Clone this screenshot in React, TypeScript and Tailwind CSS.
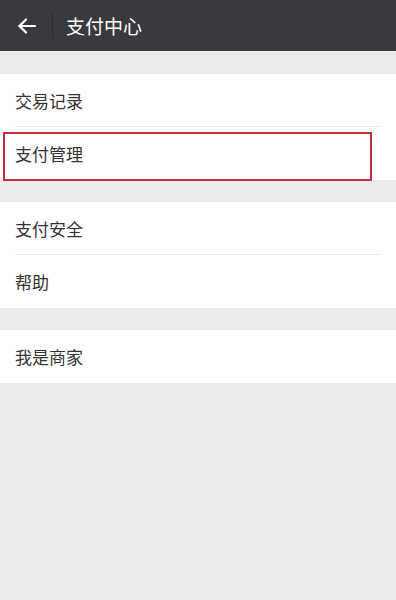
import React from "react";

const font = { fontFamily: '"Noto Sans CJK SC", "Noto Sans", sans-serif' };

function Row({ label, divider }: { label: string; divider?: boolean }) {
  return (
    <div className="relative h-[53px] flex items-center pl-[15px] bg-white">
      <span className="text-[17px] leading-none text-[#333333]">{label}</span>
      {divider && <div className="absolute left-[15px] right-[16px] bottom-0 h-px bg-[#e8e8e8]" />}
    </div>
  );
}

export default function App() {
  return (
    <div className="relative w-[396px] min-h-[600px] bg-[#ebebeb]" style={font}>
      {/* Top bar */}
      <div className="h-[51px] bg-[#393a3e] flex items-center">
        <div className="w-[52px] flex justify-center pl-[1px]">
          <svg width="20" height="18" viewBox="0 0 20 18" fill="none" stroke="#ffffff" strokeWidth="2.2" strokeLinecap="round" strokeLinejoin="round">
            <path d="M18 9H2.5" />
            <path d="M9 2.5L2.5 9L9 15.5" />
          </svg>
        </div>
        <div className="w-px h-[26px] bg-[#2c2d30]" />
        <span className="ml-[13px] text-[19px] text-white leading-none">支付中心</span>
      </div>

      <div className="h-[23px]" />
      <Row label="交易记录" divider />
      <Row label="支付管理" />

      <div className="h-[22px]" />
      <Row label="支付安全" divider />
      <Row label="帮助" />

      <div className="h-[22px]" />
      <Row label="我是商家" />

      {/* annotation highlight */}
      <div className="absolute left-[3px] top-[132px] w-[369px] h-[49px] border-2 border-[#c3303a]" />
    </div>
  );
}
